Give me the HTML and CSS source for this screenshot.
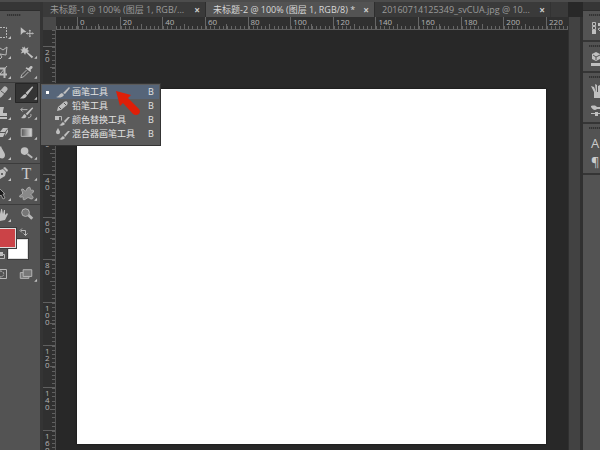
FILE: index.html
```html
<!DOCTYPE html>
<html lang="zh-CN">
<head>
<meta charset="utf-8">
<title>未标题-2</title>
<link rel="stylesheet" href="styles.css">
</head>
<body>
<div class="app">
  <aside class="toolbar">
    <div class="panel-head"></div>
    <div class="grip"></div>
    <div class="tools">
      <button class="tool left" aria-label="选框"><svg viewBox="0 0 12 20"><path d="M0 5.500H6.500V15.500H0" class="line dash"/><path d="M11 14v3H8z" class="fill"/></svg></button>
      <button class="tool" aria-label="移动"><svg viewBox="0 0 24 20"><path d="M6 5v8l2.500-2.500L12 10z" class="fill"/><path d="M15.500 8v7M12 11.500h7M14.500 9l1-1 1 1M14.500 14l1 1 1-1M13 10.500l-1 1 1 1M18 10.500l1 1-1 1" class="line"/></svg></button>
      <button class="tool left" aria-label="套索"><svg viewBox="0 0 12 20"><path d="M0 6l3 2 4-3-1 8-6-1M0 12l2 3-2 2" class="line"/><path d="M11 14v3H8z" class="fill"/></svg></button>
      <button class="tool" aria-label="魔棒"><svg viewBox="0 0 24 20"><path d="M10 4l1 2.500 3-1.500-1 3 2 1-2 1 6 5-1.500 1.500-6-6-1 2.500-1.500-2.500-3 1 1.500-2.500-2-1.500 2.500-.5-.5-2.500 2 1z" class="fill"/><path d="M23 14v3h-3z" class="fill"/></svg></button>
      <button class="tool left" aria-label="裁剪"><svg viewBox="0 0 12 20"><path d="M0 6.500h4.500V16M0 12.500h7" class="line thick"/><path d="M0 12l7-8" class="line"/><path d="M11 14v3H8z" class="fill"/></svg></button>
      <button class="tool" aria-label="吸管"><svg viewBox="0 0 24 20"><path d="M14 6l2-2c2-1 3 1 2 2l-2 2 1 1-1 1-5-4 1-1z" class="fill"/><path d="M12 8l-5 5-1 3 3-1 5-5" class="line"/><path d="M23 14v3h-3z" class="fill"/></svg></button>
    </div>
    <div class="tools">
      <button class="tool left" aria-label="修复画笔"><svg viewBox="0 0 12 20"><path d="M0 12l5-6" class="line bandage"/><path d="M1 8l4 3" class="dark-line"/><path d="M11 14v3H8z" class="fill"/></svg></button>
      <button class="tool selected" aria-label="画笔"><svg viewBox="0 0 24 20"><path d="M18 3l-7 7 2 2 6-8zM11 11l1.500 1.500C11 16 8 16 5 15.500c2-.5 3-4 6-4.500z" class="fill"/><path d="M23 14v3h-3z" class="fill"/></svg></button>
      <button class="tool left" aria-label="图章"><svg viewBox="0 0 12 20"><path d="M0 4h4L3 8v2h4v3H0zM0 14h7v2H0z" class="fill"/><path d="M11 14v3H8z" class="fill"/></svg></button>
      <button class="tool" aria-label="历史画笔"><svg viewBox="0 0 24 20"><path d="M18 4l-7 7 2 1 6-7zM10 11l2 2c-1 3-4 3-6 2 2 0 2-3 4-4z" class="fill"/><path d="M6 6.500h7M8 4.500l-2 2 2 2M16.500 11c1 3-1 4-3 4" class="line"/><path d="M23 14v3h-3z" class="fill"/></svg></button>
      <button class="tool left" aria-label="橡皮擦"><svg viewBox="0 0 12 20"><path d="M0 9l3-4h5L5 9zM0 10h5l-2 4H0zM6 9l2-3v3l-3 4z" class="fill"/><path d="M11 14v3H8z" class="fill"/></svg></button>
      <button class="tool" aria-label="渐变"><svg viewBox="0 0 24 20"><defs><linearGradient id="fade"><stop stop-color="#555"/><stop offset="1" stop-color="#ddd"/></linearGradient></defs><path d="M6.500 5.500h11v8h-11z" fill="url(#fade)" class="outline"/><path d="M23 14v3h-3z" class="fill"/></svg></button>
      <button class="tool left" aria-label="模糊"><svg viewBox="0 0 12 20"><path d="M1 3c1 4 4 6 4 9s-2 4-5 3V4z" class="fill"/><path d="M11 14v3H8z" class="fill"/></svg></button>
      <button class="tool" aria-label="减淡"><svg viewBox="0 0 24 20"><circle cx="10" cy="8" r="4" class="fill"/><path d="M13 11l5 4" class="line thick"/><path d="M23 14v3h-3z" class="fill"/></svg></button>
    </div>
    <div class="tools">
      <button class="tool left" aria-label="钢笔"><svg viewBox="0 0 12 20"><path d="M0 6l3-1 3 3-1 4-5 3zM3 4l2-1 3 3-1 2z" class="fill"/><circle cx="2" cy="10" r="1" class="hole"/><path d="M11 14v3H8z" class="fill"/></svg></button>
      <button class="tool" aria-label="文字"><span class="type-glyph">T</span><svg viewBox="0 0 24 20"><path d="M23 14v3h-3z" class="fill"/></svg></button>
      <button class="tool left" aria-label="路径选择"><svg viewBox="0 0 12 20"><path d="M-1 4l6 6H3l2 4-2 1-2-4-2 2z" class="black"/><path d="M11 14v3H8z" class="fill"/></svg></button>
      <button class="tool" aria-label="形状"><svg viewBox="0 0 24 20"><path d="M7 5c2-1 3 2 4 2s1-4 4-4c2 0 0 3 2 3s3 0 2 2-3 2-2 3 3 3 1 4-3-2-5-1-2 2-4 2c-1 0 0-3-1-3s-4 1-3-1 3-1 3-3-2-3-1-4z" class="shape"/><path d="M23 14v3h-3z" class="fill"/></svg></button>
    </div>
    <div class="tools last">
      <button class="tool left" aria-label="抓手"><svg viewBox="0 0 12 20"><path d="M0 5l1 4V4h1l1 5 1-4h1v5l2-2 1 1-3 6-5 1z" class="fill"/><path d="M11 14v3H8z" class="fill"/></svg></button>
      <button class="tool" aria-label="缩放"><svg viewBox="0 0 24 20"><path d="M14 10l4 4" class="line heavy"/><circle cx="11" cy="7.500" r="4" class="lens"/></svg></button>
    </div>
    <div class="colors">
      <button class="swatch back" aria-label="背景色"></button>
      <button class="swatch front" aria-label="前景色"></button>
      <svg class="swap" viewBox="0 0 9 9"><path d="M2 2.500h4.500v5M3 .5l-2 2 2 2M4.500 5.500l2 2 2-2" class="line"/></svg>
      <svg class="reset" viewBox="0 0 6 8"><path d="M0 1h3v4H0" class="fill"/><path d="M0 3.500h4.500v4H0" class="line"/></svg>
    </div>
    <div class="tools last">
      <button class="tool left" aria-label="快速蒙版"><svg viewBox="0 0 12 20"><path d="M0 4.500h6.500v9H0" class="line"/><path d="M0 6c5 0 5 6 0 6" class="line dash"/></svg></button>
      <button class="tool" aria-label="屏幕模式"><svg viewBox="0 0 24 20"><path d="M5.500 7.500h9v6h-9z" class="lens"/><path d="M8.500 4.500h9v7h-9z" class="lens"/><path d="M23 14v3h-3z" class="fill"/></svg></button>
    </div>
  </aside>

  <main class="document">
    <nav class="tabs">
      <div class="tab"><a href="#one">未标题-1 @ 100% (图层 1, RGB/...</a><button class="close" aria-label="关闭">×</button></div>
      <div class="tab active"><a href="#two">未标题-2 @ 100% (图层 1, RGB/8) *</a><button class="close" aria-label="关闭">×</button></div>
      <div class="tab"><a href="#three">20160714125349_svCUA.jpg @ 10...</a><button class="close" aria-label="关闭">×</button></div>
    </nav>
    <div class="view">
      <div class="corner"></div>
      <div class="ruler across">
        <i class="stub"></i><span>0</span><span>20</span><span>40</span><span>60</span><span>80</span><span>100</span><span>120</span><span>140</span><span>160</span><span>180</span><span>200</span><span class="end">220</span>
      </div>
      <div class="ruler down">
        <i class="stub"></i><span><b>20</b></span><span><b>0</b></span><span><b>20</b></span><span><b>40</b></span><span><b>60</b></span><span><b>80</b></span><span><b>100</b></span><span><b>120</b></span><span><b>140</b></span><span class="end"><b>160</b></span>
      </div>
      <div class="workspace"><div class="canvas"></div></div>
    </div>
  </main>

  <div class="gutter"></div>

  <aside class="dock">
    <div class="panel-head"></div>
    <section class="one"><div class="grip"></div><svg viewBox="0 0 17 20"><path d="M9.500 1.500h3v3h-3zM9.500 5.500h3v3h-3z" class="line"/><path d="M9 9h4v4H9zM15 2h2v3h-2z" class="fill"/><path d="M17 7l-2 1 2 2" class="line"/></svg></section>
    <section class="one"><div class="grip"></div><svg viewBox="0 0 17 20"><path d="M13 0l4 2v5l-4 2-4-2V2zM8 11h9v3H8z" class="fill"/><path d="M10 3l3 2 4-2M13 5v3" class="dark-line"/></svg></section>
    <section class="two"><div class="grip"></div><svg viewBox="0 0 17 20"><path d="M11 9h6v6h-6zM8 3l3 1 2 5h-2zM12 1l2 1v7h-1zM15 3l2-1v7h-2z" class="fill"/></svg><svg viewBox="0 0 17 20"><path d="M8 3c4-1 5 0 6 1h3v2h-3c-2 2-4 1-6-2zM8 10h9v1H8zM12 9h3v4h-3z" class="fill"/></svg></section>
    <section class="two"><div class="grip"></div><span class="glyph">A</span><span class="glyph">¶</span></section>
  </aside>
</div>

<ul class="menu">
  <li><button class="item current"><i class="mark"></i><svg viewBox="0 0 16 14"><path d="M14 2L8 8l2 1 5-6zM7 8l2 2c-2 3-5 3-8 2 3 0 3-3 6-4z" class="fill"/></svg><span>画笔工具</span><kbd>B</kbd></button></li>
  <li><button class="item"><i class="mark"></i><svg viewBox="0 0 16 14"><path d="M9 3c2-2 5 0 3 3l-6 5-4 1 1-4z" class="fill"/><path d="M4 8l2 2M9 4l2 2" class="dark-line"/></svg><span>铅笔工具</span><kbd>B</kbd></button></li>
  <li><button class="item"><i class="mark"></i><svg viewBox="0 0 16 14"><path d="M13 4L9 8l1 2 5-6zM8 9l2 2c-2 2-4 2-6 1 2 0 2-2 4-3z" class="fill"/><path d="M3.500 3.500h3v4" class="line"/><path d="M0 3h4v4H0z" class="fill"/></svg><span>颜色替换工具</span><kbd>B</kbd></button></li>
  <li><button class="item"><i class="mark"></i><svg viewBox="0 0 16 14"><path d="M13 4L9 8l1 2 5-6zM8 9l2 2c-2 2-4 2-6 1 2 0 2-2 4-3zM3 1c1 2 2 3 2 4 0 3-4 3-4 0 0-1 1-2 2-4z" class="fill"/></svg><span>混合器画笔工具</span><kbd>B</kbd></button></li>
</ul>
<svg class="pointer" viewBox="0 0 25 25"><path d="M0 0l15 4-3 3 11 11c3 4-2 8-6 5L7 12l-3 3z"/></svg>
</body>
</html>
```
FILE: styles.css
```css
* { box-sizing: border-box; }
body {
  margin: 0;
  background: #282828;
  color: #ccc;
  font-family: "Open Sans", "Noto Sans CJK SC", sans-serif;
  overflow: hidden;
}
button { margin: 0; padding: 0; border: 0; background: none; color: inherit; font: inherit; }
svg { display: block; }
.app {
  display: grid;
  grid-template-columns: 40px minmax(0, 1fr) 15px 17px;
  height: 100vh;
  border-top: 2px solid #4c4c4c;
}
.fill { fill: #c0c0c0; }
.black { fill: #1c1c1c; stroke: #999; }
.hole { fill: #444; }
.line { fill: none; stroke: #b8b8b8; }
.dark-line { fill: none; stroke: #555; }
.dash { stroke-dasharray: 2 1; }
.thick { stroke-width: 2; }
.heavy { stroke-width: 3; }
.bandage { stroke-width: 5; stroke-linecap: round; }
.outline { stroke: #bbb; }
.shape { fill: #888; stroke: #b0b0b0; }
.lens { fill: #777; stroke: #b8b8b8; }

.toolbar, .dock { background: #535353; overflow: hidden; }
.panel-head { height: 9px; background: #363636; border-bottom: 1px solid #2d2d2d; }
.grip {
  width: 14px;
  height: 2px;
  margin: 3px 7px 6px;
  background: repeating-linear-gradient(90deg, #333 0 1px, #484848 1px 2px);
}
.tools {
  display: grid;
  grid-template-columns: 15px 23px;
  grid-auto-rows: 20px;
  border-bottom: 1px solid #3c3c3c;
}
.tools.last { border: 0; }
.tool { position: relative; height: 20px; }
.tool svg { width: 23px; height: 20px; }
.tool.left svg { width: 12px; }
.selected { background: #343434; box-shadow: inset 0 0 0 1px #262626; border-radius: 1px; }
.type-glyph {
  position: absolute;
  inset: 0;
  font: 16px/20px "Liberation Serif", serif;
  text-align: center;
}
.colors {
  display: grid;
  grid-template-columns: 8px 8px 12px 10px;
  grid-template-rows: 11px 9px 11px 6px;
  padding-top: 3px;
}
.swatch { border: 1px solid #ddd; outline: 1px solid #3c3c3c; outline-offset: 0; }
.back { grid-area: 2 / 2 / 4 / 4; background: #fff; }
.front { grid-area: 1 / 1 / 3 / 3; background: #cb4347; border-left: 0; }
.swap { grid-area: 1 / 3; width: 9px; height: 9px; justify-self: end; }
.reset { grid-area: 3 / 1; width: 6px; height: 8px; align-self: end; }

.document { display: flex; flex-direction: column; min-width: 0; border-left: 3px solid #343434; }
.tabs { display: flex; height: 15px; background: #3a3a3a; }
.tab {
  display: flex;
  align-items: center;
  justify-content: space-between;
  width: 163px;
  padding: 0 5px 0 7px;
  border-right: 1px solid #2e2e2e;
  color: #9a9a9a;
  font-size: 9px;
  line-height: 16px;
  white-space: nowrap;
}
.tab.active { width: 169px; background: #535353; color: #d8d8d8; }
.tab:last-child { width: 176px; border-color: #333; }
.tab a { color: inherit; text-decoration: none; }
.close { color: #ccc; font-size: 10px; font-weight: bold; line-height: 14px; }
.view {
  flex: 1;
  display: grid;
  grid-template-columns: 13px minmax(0, 1fr);
  grid-template-rows: 13px minmax(0, 1fr);
  min-height: 0;
}
.corner { background: #494949; }
.ruler { display: grid; overflow: hidden; background: #303030; color: #b4b4b4; }
.across {
  grid-template-columns: 21px repeat(11, minmax(0, 1fr)) 22px;
  border-bottom: 1px solid #606060;
  font-size: 8px;
  line-height: 10px;
}
.down {
  grid-template-rows: 16px repeat(9, minmax(0, 1fr)) 20px;
  border-right: 1px solid #555;
  font-size: 8px;
  line-height: 7px;
}
.across span {
  padding-left: 2px;
  border-left: 1px solid #666;
  background:
    linear-gradient(#666, #666) 50% 100% / 1px 5px no-repeat,
    repeating-linear-gradient(90deg, #666 0 1px, transparent 1px 10%) 0 100% / 100% 3px no-repeat;
}
.across .stub { background: repeating-linear-gradient(90deg, #666 0 1px, transparent 1px 4px) 0 100% / 100% 3px no-repeat; }
.across .end { background: repeating-linear-gradient(90deg, #666 0 1px, transparent 1px 4px) 0 100% / 100% 3px no-repeat; }
.down span {
  padding: 1px 0 0 2px;
  border-top: 1px solid #606060;
  background:
    linear-gradient(#606060, #606060) 100% 50% / 5px 1px no-repeat,
    repeating-linear-gradient(#606060 0 1px, transparent 1px 10%) 100% 0 / 3px 100% no-repeat;
}
.down .stub, .down .end { background: repeating-linear-gradient(#606060 0 1px, transparent 1px 4px) 100% 0 / 3px 100% no-repeat; }
.down b { display: block; width: 5px; font-weight: normal; word-break: break-all; }
.workspace { padding: 59px 22px 6px 21px; background: #282828; }
.canvas { height: 100%; background: #fff; box-shadow: 0 0 2px #111; }
.gutter { margin-top: 15px; background: #424242; border: solid #303030; border-width: 0 3px 0 1px; }

.dock section { border-bottom: 2px solid #353535; padding-top: 3px; }
.dock .grip { margin: 0 0 5px 6px; }
.dock .one { height: 31px; }
.dock .two { height: 51px; }
.dock svg { width: 17px; height: 20px; }
.glyph { display: block; padding-left: 8px; font-size: 13px; line-height: 19px; }

.menu {
  position: absolute;
  top: 83px;
  left: 40px;
  width: 121px;
  margin: 0;
  padding: 1px 1px 4px;
  border: 1px solid #343434;
  background: #5b5b5b;
  list-style: none;
}
.item {
  display: grid;
  grid-template-columns: 13px 17px 1fr 11px;
  align-items: center;
  width: 100%;
  height: 14px;
  color: #e2e2e2;
  font-size: 9px;
  line-height: 14px;
  text-align: left;
  white-space: nowrap;
}
.item svg { width: 16px; height: 14px; }
.item kbd { font: inherit; }
.current { background: #566579; }
.current .mark { width: 3px; height: 3px; margin-left: 4px; background: #fff; }
.pointer { position: absolute; top: 91px; left: 116px; width: 25px; height: 25px; fill: #df1f08; }
```
